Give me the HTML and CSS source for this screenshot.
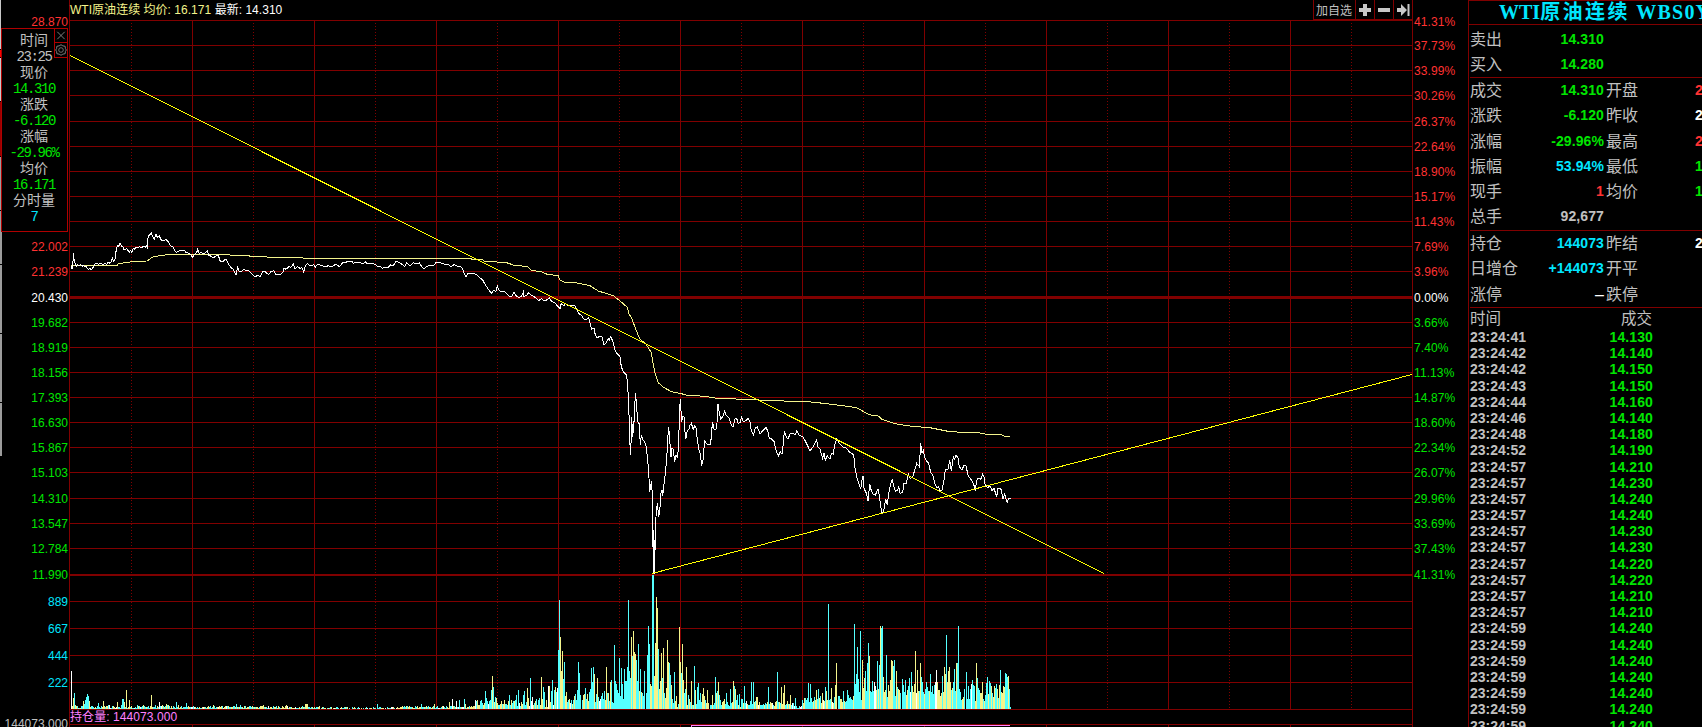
FILE: index.html
```
<!DOCTYPE html>
<html lang="zh-CN">
<head>
<meta charset="utf-8">
<title>WTI原油连续</title>
<link rel="stylesheet" href="styles.css">
</head>
<body>
<div class="terminal">
  <aside class="axis axis-left">
    <div class="edge"><i class="e1"></i><i class="e2"></i><i class="e3"></i><i class="e4"></i><i class="e5"></i><i class="e6"></i><i class="e6"></i><i class="e6"></i><i class="e7"></i></div>
    <div class="labels" id="left-labels"></div>
    <div class="info">
      <div class="info-tools">
        <svg width="13" height="13" viewBox="0 0 13 13"><path d="M2.5 2.5l8 8M10.5 2.5l-8 8" stroke="#888" fill="none"/></svg>
        <svg width="13" height="15" viewBox="0 0 13 15"><path d="M4.5 3l2-1.2 2 1.2 2.5.5.3 2.5 1 1.5-1 1.5-.3 2.5-2.5.5-2 1.2-2-1.2-2.5-.5-.3-2.5-1-1.5 1-1.5.3-2.5z" stroke="#888" fill="none"/><circle cx="6.5" cy="7.5" r="2.5" stroke="#777" fill="none"/></svg>
      </div>
      <p>时间</p><p class="num">23:25</p>
      <p>现价</p><p class="num green">14.310</p>
      <p>涨跌</p><p class="num green">-6.120</p>
      <p>涨幅</p><p class="num green">-29.96%</p>
      <p>均价</p><p class="num green">16.171</p>
      <p>分时量</p><p class="num cyan">7</p>
    </div>
  </aside>

  <main class="chart">
    <svg id="plot" width="1344" height="727" viewBox="69 0 1344 727" shape-rendering="crispEdges" fill="none"></svg>
    <div class="legend"><span class="pale">WTI原油连续 均价: 16.171</span> <span class="white">最新: 14.310</span></div>
    <div class="toolbar">
      <span class="tool add">加自选</span>
      <span class="tool"><svg width="12" height="12" shape-rendering="crispEdges"><path d="M4 0h4v4h4v4H8v4H4V8H0V4h4z" fill="#c8c8c8"/></svg></span>
      <span class="tool"><svg width="12" height="12" shape-rendering="crispEdges"><path d="M0 4h12v4H0z" fill="#c8c8c8"/></svg></span>
      <span class="tool"><svg width="13" height="12"><path d="M0 4h4V0l6 6-6 6V8H0zM10.500 0h2v12h-2z" fill="#c8c8c8"/></svg></span>
    </div>
    <div class="holding">持仓量: 144073.000</div>
  </main>

  <aside class="axis axis-right"><div class="labels" id="right-labels"></div></aside>

  <section class="quote">
    <h1><span class="latin">WTI</span><span class="name">原油连续</span> WBS0Y</h1>
    <div class="rows two">
      <div class="row"><span>卖出</span><b class="green">14.310</b></div>
      <div class="row"><span>买入</span><b class="green">14.280</b></div>
    </div>
    <div class="rows six">
      <div class="row"><span>成交</span><b class="green">14.310</b><span>开盘</span><b class="red cut">2</b></div>
      <div class="row"><span>涨跌</span><b class="green">-6.120</b><span>昨收</span><b class="white cut">2</b></div>
      <div class="row"><span>涨幅</span><b class="green">-29.96%</b><span>最高</span><b class="red cut">2</b></div>
      <div class="row"><span>振幅</span><b class="cyan">53.94%</b><span>最低</span><b class="green cut">1</b></div>
      <div class="row"><span>现手</span><b class="red">1</b><span>均价</span><b class="green cut">1</b></div>
      <div class="row"><span>总手</span><b>92,677</b></div>
    </div>
    <div class="rows three">
      <div class="row"><span>持仓</span><b class="cyan">144073</b><span>昨结</span><b class="white cut">2</b></div>
      <div class="row"><span>日增仓</span><b class="cyan">+144073</b><span>开平</span></div>
      <div class="row"><span>涨停</span><b class="white dash">–</b><span>跌停</span></div>
    </div>
    <div class="ticks-head"><span>时间</span><span class="price">成交</span></div>
    <div id="ticks"></div>
  </section>
</div>
<script src="app.js"></script>
</body>
</html>
```
FILE: styles.css
```
* { box-sizing: border-box; }
body { margin: 0; background: #000; color: #c0c0c0; overflow: hidden; font-family: "Liberation Sans", "Noto Sans CJK SC", sans-serif; }
p, h1 { margin: 0; font-weight: normal; }
.terminal { display: flex; width: 1702px; height: 727px; overflow: hidden; }
.green { color: #00e600; }
.red { color: #ff3232; }
.cyan { color: #00e6ff; }
.white { color: #fff; }
.gray { color: #c0c0c0; }
.pale { color: #f4f48c; }

.axis { position: relative; flex: none; height: 727px; overflow: hidden; font-size: 12px; }
.axis-left { width: 69px; display: flex; justify-content: space-between; }
.axis-right { width: 55px; padding-left: 1px; letter-spacing: .1px; }
.labels { padding-top: 10px; }
.axis-left .labels { width: 66px; padding-right: 0; margin-right: 1px; text-align: right; }
.label { height: 25px; line-height: 25px; white-space: nowrap; }
.label.first { height: 24px; }
.label.gap { margin-top: 1px; }
.label.after-info { margin-top: 201px; }
.label.volume { height: 27px; line-height: 27px; }
.label.volume-top { margin-top: 1px; }
.label.open-interest { margin-top: 15px; margin-left: -5px; }

.edge { width: 2px; display: flex; flex-direction: column; }
.edge i { display: block; width: 2px; background: #9c9c9c; margin-bottom: 1px; }
.edge .e1 { width: 1px; height: 49px; background: #c8c8c8; }
.edge .e2 { width: 1px; height: 7px; background: #f00; }
.edge .e3 { width: 1px; height: 43px; background: #c8c8c8; }
.edge .e4 { width: 1px; height: 54px; background: #900; }
.edge .e5 { width: 1px; height: 53px; }
.edge .e6 { height: 53px; }
.edge .e6 + .e6 { height: 68px; }
.edge .e7 { height: 53px; }

.info { position: absolute; left: 1px; top: 28px; width: 67px; height: 204px; padding-top: 3px; border: 1px solid #b00000; background: #000; font-size: 14px; line-height: 16px; text-align: center; }
.info p { height: 16px; padding-right: 1px; }
.info .num { font-family: "Liberation Mono", monospace; letter-spacing: -1.4px; line-height: 18px; }
.info-tools { position: absolute; top: -1px; right: -1px; width: 14px; height: 30px; border: 1px solid #b00000; display: flex; flex-direction: column; background: #000; }
.info-tools svg { display: block; flex: none; width: 12px; }
.info-tools svg + svg { border-top: 1px solid #b00000; }

.chart { position: relative; flex: none; width: 1344px; height: 727px; }
.chart > svg { display: block; }
.legend, .holding { position: absolute; left: 1px; font-size: 12px; line-height: 16px; white-space: pre; }
.legend { top: 2px; letter-spacing: .03px; }
.holding { top: 709px; color: #ff80ff; letter-spacing: .08px; }
.toolbar { position: absolute; right: 0; top: 0; height: 20px; display: flex; background: #000; border-bottom: 1px solid #800000; border-right: 1px solid #800000; }
.tool { width: 19px; border-left: 1px solid #800000; display: flex; align-items: center; justify-content: center; font-size: 12px; }
.tool.add { width: 42px; padding-right: 1px; }

.quote { flex: none; width: 234px; height: 727px; overflow: hidden; border-left: 1px solid #800000; border-top: 1px solid #800000; font-size: 14px; }
.quote h1 { height: 24px; padding-left: 30px; border-bottom: 1px solid #800000; color: #00e6ff; font: bold 20px/22px "Liberation Serif", "Noto Sans CJK SC", serif; letter-spacing: 1.2px; white-space: nowrap; }
.quote h1 .latin { letter-spacing: 0; }
.quote h1 .name { letter-spacing: 2.5px; }
.rows { border-bottom: 1px solid #800000; margin-left: 1px; }
.two { height: 53px; padding-top: 2px; }
.six { height: 153px; padding-top: 0; }
.three { height: 77px; padding-top: 0; }
.row { display: grid; grid-template-columns: 48px 86px 91px 10px; height: 25.3px; line-height: 25px; white-space: nowrap; }
.row span { font-size: 16px; }
.row b { text-align: right; letter-spacing: .1px; }
.row b + span { padding-left: 2px; }
.row .cut { text-align: left; }
.row .dash { font-weight: normal; font-size: 16px; }
.ticks-head { height: 21px; line-height: 21px; font-size: 15.500px; display: flex; justify-content: space-between; padding: 0 50px 0 1px; }
.tick { display: flex; justify-content: space-between; padding: 0 49px 0 1px; height: 16.2px; line-height: 17px; font-weight: bold; }
.tick .green { letter-spacing: .1px; }
```
FILE: app.js
```
const NS = 'http://www.w3.org/2000/svg';
const plot = document.getElementById('plot');
const GRID = '#800000';

function path(d, stroke, width = 1, dash) {
  const p = document.createElementNS(NS, 'path');
  p.setAttribute('d', d);
  p.setAttribute('stroke', stroke);
  p.setAttribute('stroke-width', width);
  if (dash) p.setAttribute('stroke-dasharray', dash);
  plot.appendChild(p);
}

/* ---- axis labels ---- */
function labels(id, items) {
  document.getElementById(id).innerHTML = items
    .map(([text, cls]) => `<div class="label ${cls}">${text}</div>`).join('');
}
const leftDown = ['19.682', '18.919', '18.156', '17.393', '16.630', '15.867', '15.103', '14.310', '13.547', '12.784', '11.990'];
const rightDown = ['3.66%', '7.40%', '11.13%', '14.87%', '18.60%', '22.34%', '26.07%', '29.96%', '33.69%', '37.43%', '41.31%'];
const down = list => list.map((t, i) => [t, 'green' + (i === 7 || i === 10 ? ' gap' : '')]);
labels('left-labels', [
  ['28.870', 'red first'], ['22.002', 'red after-info'], ['21.239', 'red'], ['20.430', 'white gap'],
  ...down(leftDown),
  ['889', 'cyan volume volume-top'], ['667', 'cyan volume'], ['444', 'cyan volume'], ['222', 'cyan volume'],
  ['144073.000', 'gray open-interest'],
]);
const rightUp = ['37.73%', '33.99%', '30.26%', '26.37%', '22.64%', '18.90%', '15.17%', '11.43%', '7.69%', '3.96%'];
labels('right-labels', [
  ['41.31%', 'red first'],
  ...rightUp.map((t, i) => [t, 'red' + (i === 3 ? ' gap' : '')]),
  ['0.00%', 'white gap'],
  ...down(rightDown),
]);

/* ---- grid ---- */
let solid = '', dotted = '';
for (let x = 192; x < 1400; x += 122) solid += `M${x + .5} 20V709M${x + .5} 724V727`;
for (let x = 131; x < 1400; x += 122) dotted += `M${x + .5} 23V709`;
const ys = [20, 45, 70, 95, 121, 146, 171, 196, 221, 246, 271, 322, 347, 372, 397, 422, 447, 472, 498, 523, 548, 601, 628, 655, 682, 709, 724];
ys.forEach(y => { solid += `M69 ${y + .5}H1413`; });
path(solid + 'M69.5 0V727M1412.500 0V727', GRID);
path(dotted, GRID, 1, '1 2');
path('M69 297.500H1413', GRID, 3);
path('M69 575H1413', GRID, 2);

/* ---- volume bars: c = falling, y = rising, w = flat ---- */
const COLORS = { c: '#54ffff', y: '#f4f48c', w: '#ffffff' };
const bars = {};
function run(start, text) {
  text.trim().split(/\s+/).forEach((t, i) => { bars[start + i] = [t[0], +t.slice(1)]; });
}
function peaks(text) {
  text.trim().split(/\s+/).forEach(t => {
    const m = t.match(/(\d+)([cyw])(\d+)/);
    bars[+m[1]] = [m[2], +m[3]];
  });
}
let seed = 17;
const rnd = () => (seed = (seed * 16807) % 2147483647) / 2147483647;
[[71, 170, 1, 4], [170, 320, 1, 3], [320, 400, 0, 2], [400, 475, 1, 3], [475, 500, 3, 9], [500, 558, 2, 9], [748, 800, 3, 8], [795, 802, 1, 3], [802, 853, 6, 12], [853, 1010, 13, 24]]
  .forEach(([a, b, lo, hi]) => {
    for (let x = a; x < b; x++) {
      const r = rnd();
      bars[x] = [r < .5 ? 'c' : r < .92 ? 'y' : 'w', Math.round(lo + rnd() * (hi - lo))];
    }
  });
peaks(`71w38 73y11 74c16 83y8 84c5 85c9 86c12 87c15 88c13 89y8 98c6 103y8 117y7 122c10 123c10 124y7 126y19 129y9 137c4 151y14 159w7 166y5 176c7 178y4
186c6 193c3 213y4 236c5 240c4 263y4 286y4 305y5 306y5 307y5 377c5 421c5 434y5 449y7 452w10 456w8 459c9 464c10 465y5 480c8 485c18 486c11 487c8 489c8 490c9 491c19 492y33 493c22 495c12 496y11 497y6
509c14 511y9 516c14 518c19 523c14 524c18 527y21 528y11 530c31 531w8 532w12 536c10 539c11 541y32 542y10 543c22 544c17 546y9 548w23 549y23
751c27 753c27 756y12 757y12 768c22 777c37 778c7 781y22 783y16 784y24 787y8 790y14 792w6 795c11`);
run(551, `c18 c29 w4 c19 y22 c17 w21 c59 c109 y72 y38 y58 c30 c47 y13 y17 c7 c9 y10 w6 c9 y5 c9 y13 c15 c9 c19 c47 c36 c14 c0 c9 y14 y15 c21 c10 y15 y8 c17 c20 c41 c27 c42 y35 c7 c15 y31 c12 w8 w10 c13 c16 c10 c18 y9 y42 c16 y16 c8 y27 c29 c7 c6 c64 c28 c25 c19 c16 c51 c13 c41 c25 c10 c40 c28 c28 c42 c109 c38 c31 y72 c53 y78 y57 y55 c49 c28 c65 y18 c40 y17 c16 c13 c38 c0 c16 c54 c83 c65 y25 y23 c134 c134 y33 y66 y112 y101 c60 y20 y28 y56 c31 y61 c16 y11 y21 y69 y47 c46 c34 y24 c10 c6 c37 y8 y13 y2 c5 y82 y47 c36 y65 y29 c16 c20 y42 y4 c14 y10 c7 y28 c4 y4 c43 y19 c5 c22 c26 c9 c16 c7 y15 y21 y13 c9 y6 y19 y6 c0 c4 c4 y14 c4 c6 c32 y16 c18 y27 c14 c9 c4 y7 y8 y10 c5 c16 c7 c4 c3 c20 c6 y7 y28 c23 y20 c9 c14 y4 c15 y2 c10 c10 y6 c23 c6 w8 y5`);
peaks(`802c9 808c26 810c25 814c12 816y19 818c20 820c13 822y16 825c22 826y18 828c105 831y21 835y24 836y46 837y0 838c13 839c13 843c18 847c19 848c14 854c85 855c25 856c35 857c62 858c30 859c17 860c78 861c9 862y49 863y21 864y31 865c38 866c18 867c46 868c66 869y53 870c18 872c28 873c18 874w27 875w23 877c48 878y20 879c44 880y83 881c81 882c83 883y32 884y17 886c54 887c12 889y18 890y29 891y49 892y48 893c43 894c49 895c13 896y38 897c22 899y19 901c0 902c30 903c24 905c29 906y14 909c31 911c37 914y25 915y58 916w16 917y39 918y18 920y46 921c32 922c27 924y15 926c27 927c22 930c35 931c17 934c24 935w27 936w39 937y27 941y16 942c33 944y42 945y35 946c74 947y27 948y38 949y42 950y27 953c27 954c40 955c18 956y46 957c46 958c83 959c20 960c17 961c9 962y10 963y12 964c20 965c0 966c37 967c10 968c23 969c10 971w25 972c29 974c23 975y8 976y46 977c31 978c21 980y16 982y27 983c10 984y8 985c14 986c26 987c32 988y15 989c28 990c26 991y23 993y12 995c21 996c25 997y20 998c11 1000c39 1001y17 1002y16 1004y22 1005c36 1006c35 1007c32 1008y33 1009c20 1010c2`);
const out = { c: '', y: '', w: '' };
Object.entries(bars).forEach(([x, [k, h]]) => { if (h) out[k] += `M${+x + .5} 709v${-h}`; });
Object.keys(out).forEach(k => path(out[k], COLORS[k]));

/* ---- price lines: each segment is an origin plus points in thirds of a pixel ---- */
function line(segments, color) {
  const pts = [];
  segments.forEach(([ox, oy, text]) => text.trim().split(/\s+/).forEach(p => {
    const [x, y] = p.split(',').map(Number);
    pts.push((ox + x / 3).toFixed(1) + ' ' + (oy + y / 3).toFixed(1));
  }));
  path('M' + pts.join('L'), color);
}
line([
  [0, 0, '213,797 350,797 355,792 370,789 395,785 440,783 450,778 455,772 475,768 500,764 690,764 692,767 748,767 750,770 800,770 806,773 870,773'],
  [290, 245, '0,38 38,38 40,41 538,41'],
  [440, 240, '90,56 105,59 128,59 132,63 200,68 220,75 264,80 272,90 305,96 325,104 354,106 360,120 375,127 400,127 450,137 475,153 520,167 540,183 562,202 566,220 575,235 590,275 600,298 618,312 634,338 638,365 645,400 655,428 670,442 695,455 720,460'],
  [600, 360, '258,105 312,109 352,115 430,118 520,122 625,125 670,130 750,140'],
  [820, 400, '108,23 122,30 148,44 175,48 186,58 225,71 275,79 330,83 390,95 480,99 500,103 545,105 555,109 570,109'],
], '#f4f48c');
line([
  [0, 0, '213,808 217,795 218,808 220,760 223,785 226,792 229,800 232,793 237,798 242,793 246,799 250,796 254,799 258,799 262,806 266,808 270,805 274,809 278,804 282,798 286,791 290,789 296,793 302,790 308,794 314,791 320,793 325,786 330,790 335,782 337,774 341,784 345,778 347,765 349,745 353,736 357,739 360,730 365,739 368,738 371,749 376,748 380,746 384,752 388,756 391,751 395,757 400,745 405,748 408,741 412,744 418,740 425,743 430,738 436,742 440,738 442,742 444,715 448,704 452,705 454,697 457,709 463,716 468,702 472,712 478,708 484,720 492,721 498,719 505,725 512,738 520,742 524,752 530,757 540,751 552,750 558,757 568,760 578,772 584,763 590,758 593,747 597,760 604,757 610,762 616,758 622,752 626,766 634,769 640,773 648,768 655,766 660,782 664,785 670,785 675,777 680,780 686,793 694,804 700,808 708,824 713,802 718,816 725,814 732,808 740,812 748,813 756,822 764,830 775,826 780,831 787,816 795,813 800,820 806,824 812,815 822,812 828,824 840,824 848,818 852,805 858,808 866,800 873,802 880,793 885,806 892,800 898,803'],
  [290, 245, '30,70 36,68 41,80 46,64 52,55 58,60 66,62 72,59 76,66 82,58 90,60 98,63 108,66 114,62 124,65 130,62 138,57 146,64 152,62 158,52 166,54 174,48 186,48 190,55 198,52 210,52 218,57 226,50 232,56 240,54 250,56 258,60 264,66 270,63 276,70 286,67 296,66 302,60 310,62 318,49 326,52 336,58 344,65 350,54 360,62 370,53 378,57 388,54 396,66 402,71 410,65 418,60 430,62 438,53 446,51 456,56 466,58 476,60 484,65 492,59 502,63 512,64 518,72 522,85 528,95 534,84 540,84'],
  [440, 240, '100,100 110,104 118,112 128,120 136,134 144,146 154,160 160,152 168,154 172,136 176,150 184,155 192,153 200,162 208,168 216,168 222,155 228,167 236,172 244,170 250,156 252,170 260,166 266,158 272,165 280,169 288,174 296,182 304,176 312,182 320,180 328,174 336,185 344,188 350,195 360,206 364,190 372,198 376,190 384,198 394,196 404,196 410,208 416,220 426,228 432,238 440,238 446,232 450,250 455,268 462,264 466,285 472,294 480,288 486,290 492,314 498,310 504,296 508,300 512,290 518,303 524,328 530,340 540,350 544,380 550,395 558,404'],
  [600, 360, '80,46 84,95 86,130 89,240 92,284 95,172 98,230 100,208 103,175 106,100 109,125 113,185 118,192 121,255 124,226 128,238 135,248 139,262 143,300 147,355 149,395 152,380 154,362 157,400 159,560 161,640 163,640 166,540 168,470 172,430 176,467 179,460 182,402 186,390 188,408 193,365 196,340 200,300 203,235 206,202 209,240 213,290 216,264 220,268 224,305 228,285 233,292 236,240 239,150 241,118 245,186 248,170 252,170 254,205 257,238 262,212 267,208 270,195 274,190 280,208 284,198 289,205 292,240 298,275 301,282 305,317 309,300 314,240 318,250 324,255 332,252 335,210 338,186 343,210 350,205 354,133 358,160 362,178 368,170 374,154 378,165 388,175 394,196 400,200 404,178 410,175 414,190 420,188 425,170 430,186 438,182 444,175 450,185 454,212 460,225 466,205 472,200 480,222 486,215 498,202 504,215 508,235 514,236 522,244 528,270 535,288 541,276 546,282 551,240 553,212 558,228 564,238 570,222 578,220 586,224 590,212 596,224 608,230 614,240 622,255 630,272 638,262 645,250 650,240 654,260 660,268 668,296 672,280 676,300 682,288 690,298 694,280 700,282 704,255 710,236 716,248 722,254 730,262 738,264 744,270 750,278'],
  [820, 400, '98,160 102,175 105,205 110,230 116,248 122,268 126,240 129,228 132,265 140,282 144,304 149,252 154,272 160,284 166,285 174,268 178,285 182,320 186,338 190,338 194,315 197,298 202,315 206,280 212,252 217,236 220,255 226,274 232,272 236,260 240,280 248,278 252,250 258,252 265,222 270,235 278,232 284,210 290,190 298,200 302,130 306,160 310,152 316,178 326,190 332,218 338,225 344,250 350,262 356,260 360,274 366,270 372,240 376,210 384,208 389,180 394,212 400,170 404,178 408,166 414,174 418,200 426,210 432,195 438,198 444,225 450,235 458,245 466,268 472,235 482,238 488,222 492,232 496,258 504,262 510,258 516,272 522,265 530,290 534,265 542,264 546,282 549,298 554,280 558,298 562,306 566,296 572,296'],
], '#ffffff');
path('M653.500 530V573M654.500 540V573', '#ffffff');

/* ---- trend lines and open interest ---- */
path('M70 55.500L1104 573.500M652 573.500L1412 374.500', '#ffff00');
path('M691.500 727V725.500H1010', '#ff80ff');

/* ---- trades ---- */
const trades = `23:24:41 14.130
23:24:42 14.140
23:24:42 14.150
23:24:43 14.150
23:24:44 14.160
23:24:46 14.140
23:24:48 14.180
23:24:52 14.190
23:24:57 14.210
23:24:57 14.230
23:24:57 14.240
23:24:57 14.240
23:24:57 14.230
23:24:57 14.230
23:24:57 14.220
23:24:57 14.220
23:24:57 14.210
23:24:57 14.210
23:24:59 14.240
23:24:59 14.240
23:24:59 14.240
23:24:59 14.240
23:24:59 14.240
23:24:59 14.240
23:24:59 14.240`;
document.getElementById('ticks').innerHTML = trades.split('\n').map(t => {
  const [time, price] = t.split(' ');
  return `<div class="tick"><span>${time}</span><span class="green">${price}</span></div>`;
}).join('');
```
